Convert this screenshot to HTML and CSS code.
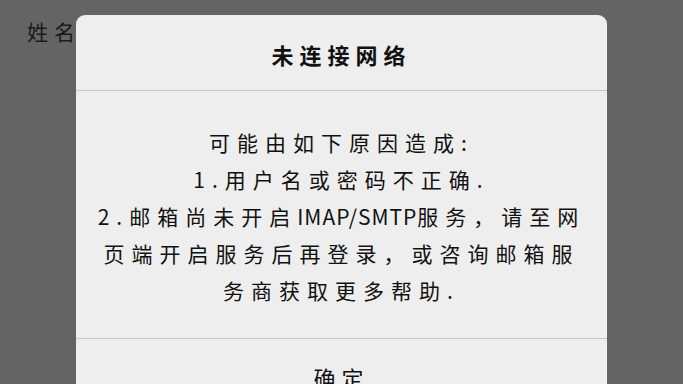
FILE: index.html
```html
<!DOCTYPE html>
<html lang="zh-CN">
<head>
    <meta charset="UTF-8">
    <meta name="viewport" content="width=device-width, initial-scale=1.0">
    <title>未连接网络</title>
    <link rel="stylesheet" href="styles.css">
</head>
<body>
    <div class="form">
        <div class="form-row">
            <label>姓名</label>
        </div>
    </div>

    <!-- Alert Dialog -->
    <div class="dialog">
        <div class="dialog-title">未连接网络</div>
        <div class="dialog-body">
            可能由如下原因造成:<br>
            1.用户名或密码不正确.<br>
            2.邮箱尚未开启<span class="latin">IMAP/SMTP</span>服务，请至网<br>
            页端开启服务后再登录，或咨询邮箱服<br>
            务商获取更多帮助.
        </div>
        <div class="dialog-button">确定</div>
    </div>
</body>
</html>
```

FILE: styles.css
```css
body {
    margin: 0;
    padding: 0;
    background-color: #646464;
    font-family: "Noto Sans CJK SC", "Noto Sans", sans-serif;
    color: #111;
    height: 384px;
    overflow: hidden;
}
.form {
    padding: 16px 0 0 27px;
}
.form-row label {
    font-size: 21px;
    letter-spacing: 6px;
    color: #1a1a1a;
}
.dialog {
    position: absolute;
    left: 76px;
    top: 15px;
    width: 531px;
    background: #eeeeee;
    border-radius: 9px;
}
.dialog-title {
    height: 75px;
    line-height: 78px;
    text-align: center;
    font-size: 22px;
    font-weight: bold;
    letter-spacing: 6px;
    border-bottom: 1px solid #c6c6c6;
}
.dialog-body {
    padding: 33px 10px 29px;
    text-align: center;
    font-size: 21px;
    line-height: 37px;
    letter-spacing: 7px;
    white-space: nowrap;
}
.dialog-body .latin {
    letter-spacing: 1px;
}
.dialog-button {
    border-top: 1px solid #c6c6c6;
    height: 76px;
    line-height: 76px;
    text-align: center;
    font-size: 22px;
    letter-spacing: 6px;
}
```
